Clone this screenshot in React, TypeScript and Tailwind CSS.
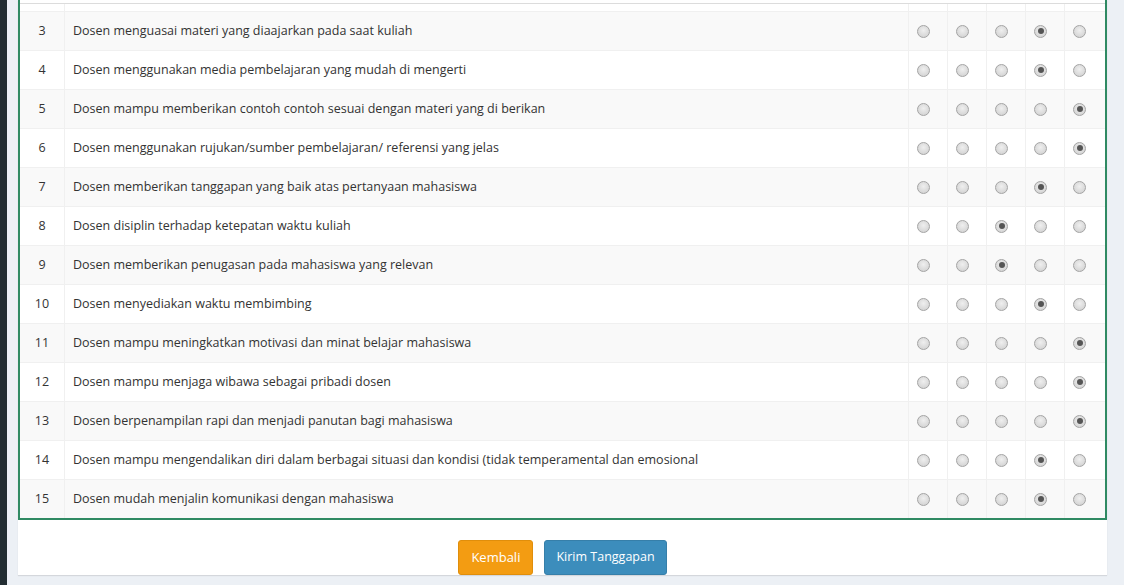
const rows: [number, string, number][] = [
  [3, "Dosen menguasai materi yang diaajarkan pada saat kuliah", 3],
  [4, "Dosen menggunakan media pembelajaran yang mudah di mengerti", 3],
  [5, "Dosen mampu memberikan contoh contoh sesuai dengan materi yang di berikan", 4],
  [6, "Dosen menggunakan rujukan/sumber pembelajaran/ referensi yang jelas", 4],
  [7, "Dosen memberikan tanggapan yang baik atas pertanyaan mahasiswa", 3],
  [8, "Dosen disiplin terhadap ketepatan waktu kuliah", 2],
  [9, "Dosen memberikan penugasan pada mahasiswa yang relevan", 2],
  [10, "Dosen menyediakan waktu membimbing", 3],
  [11, "Dosen mampu meningkatkan motivasi dan minat belajar mahasiswa", 4],
  [12, "Dosen mampu menjaga wibawa sebagai pribadi dosen", 4],
  [13, "Dosen berpenampilan rapi dan menjadi panutan bagi mahasiswa", 4],
  [14, "Dosen mampu mengendalikan diri dalam berbagai situasi dan kondisi (tidak temperamental dan emosional", 3],
  [15, "Dosen mudah menjalin komunikasi dengan mahasiswa", 3],
];

function Radio({ checked }: { checked: boolean }) {
  return (
    <span className="flex h-[13px] w-[13px] items-center justify-center rounded-full border border-[#a4a4a4] bg-[radial-gradient(circle_at_50%_40%,#efefef,#cdcdcd)]">
      {checked && <span className="h-[6px] w-[6px] rounded-full bg-[#555]" />}
    </span>
  );
}

export default function App() {
  return (
    <div
      className="flex h-[585px] w-[1124px] overflow-hidden bg-[#ecf0f5] text-[#333]"
      style={{ fontFamily: '"Open Sans", "Noto Sans", sans-serif' }}
    >
      <div className="w-[7px] shrink-0 bg-[#222d32]" />
      <div className="ml-[11px] flex w-[1089px] flex-col">
        <div className="flex flex-col bg-white shadow-[0_1px_1px_rgba(0,0,0,0.1)]">
          <div className="border-x-2 border-b-2 border-[#2f8a63]">
            <div className="h-[3px] bg-white" />
            <div className="h-px bg-[#dcdcdc]" />
            <div className="flex h-[7px]">
              <div className="w-[45px] border-r border-[#f0f0f0]" />
              <div className="flex-1 border-r border-[#f0f0f0]" />
              {[0, 1, 2, 3, 4].map((i) => (
                <div key={i} className="w-[39px] border-r border-[#f0f0f0] last:w-[40px] last:border-r-0" />
              ))}
            </div>
            {rows.map(([no, text, sel], idx) => (
              <div
                key={no}
                className={`flex h-[39px] border-t border-[#f0f0f0] text-[12.5px] ${idx % 2 === 0 ? "bg-[#f9f9f9]" : "bg-white"}`}
              >
                <div className="flex w-[45px] items-center justify-center border-r border-[#f0f0f0]">{no}</div>
                <div className="flex flex-1 items-center border-r border-[#f0f0f0] pl-[8px]">{text}</div>
                {[0, 1, 2, 3, 4].map((i) => (
                  <div
                    key={i}
                    className="flex w-[39px] items-center border-r border-[#f0f0f0] pl-[8px] last:w-[40px] last:border-r-0"
                  >
                    <Radio checked={i === sel} />
                  </div>
                ))}
              </div>
            ))}
          </div>
          <div className="flex h-[55px] items-end justify-center gap-[11px]">
            <button className="h-[35px] rounded-[3px] border border-[#e08e0b] bg-[#f39c12] px-[12px] text-[13px] text-white">
              Kembali
            </button>
            <button className="h-[35px] rounded-[3px] border border-[#367fa9] bg-[#3c8dbc] px-[11px] text-[12.5px] text-white">
              Kirim Tanggapan
            </button>
          </div>
        </div>
      </div>
    </div>
  );
}
